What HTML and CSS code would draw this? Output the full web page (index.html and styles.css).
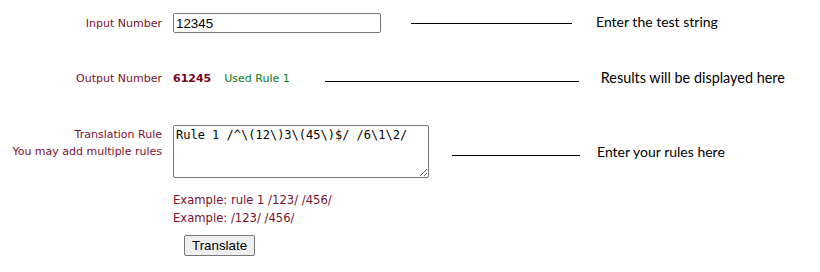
FILE: index.html
```html
<!DOCTYPE html>
<html lang="en">
<head>
    <meta charset="UTF-8">
    <meta name="viewport" content="width=device-width, initial-scale=1.0">
    <title>Number Translation</title>
    <link rel="stylesheet" href="styles.css">
</head>
<body>
    <div class="row row-input">
        <label class="label" for="inputNumber">Input Number</label>
        <input type="text" id="inputNumber" class="input-number" value="12345">
        <span class="pointer pointer-input"></span>
        <span class="note note-input">Enter the test string</span>
    </div>

    <div class="row row-output">
        <span class="label">Output Number</span>
        <span class="output-value">61245</span>
        <span class="used-rule">Used Rule 1</span>
        <span class="pointer pointer-output"></span>
        <span class="note note-output">Results will be displayed here</span>
    </div>

    <div class="row row-rules">
        <label class="label label-rules" for="rules">Translation Rule<br>You may add multiple rules</label>
        <textarea id="rules" class="rules">Rule 1 /^\(12\)3\(45\)$/ /6\1\2/</textarea>
        <span class="pointer pointer-rules"></span>
        <span class="note note-rules">Enter your rules here</span>
    </div>

    <div class="examples">
        <div>Example: rule 1 /123/ /456/</div>
        <div>Example: /123/ /456/</div>
    </div>

    <div class="actions">
        <button class="translate-btn">Translate</button>
    </div>
</body>
</html>
```

FILE: styles.css
```css
body {
    margin: 0;
    font-family: "DejaVu Sans", Verdana, sans-serif;
    font-size: 11px;
    color: #7a0f2e;
    background: #fff;
}
.row {
    display: flex;
}
.label {
    width: 162px;
    flex: none;
    text-align: right;
    margin-right: 11px;
    line-height: 17px;
}
.row-input {
    margin-top: 13px;
    height: 20px;
    align-items: center;
}
.input-number {
    box-sizing: border-box;
    width: 208px;
    height: 20px;
    margin: 0;
    padding: 0 2px;
    border: 1px solid #767676;
    border-radius: 2px;
    font-family: "Liberation Sans", Arial, sans-serif;
    font-size: 13.33px;
    color: #000;
}
.pointer {
    flex: none;
    height: 1px;
    background: #000;
}
.note {
    font-family: Lato, "Open Sans", sans-serif;
    font-size: 14px;
    color: #000;
}
.pointer-input {
    width: 161px;
    margin-left: 30px;
}
.note-input {
    margin-left: 24px;
    margin-top: -4px;
}
.row-output {
    margin-top: 35px;
    height: 20px;
    align-items: center;
}
.output-value {
    font-weight: bold;
    color: #800020;
}
.used-rule {
    margin-left: 13px;
    color: #0a7a1e;
}
.pointer-output {
    width: 254px;
    margin-left: 35px;
    margin-top: 6px;
}
.note-output {
    margin-left: 22px;
    margin-top: -2px;
    font-size: 14.4px;
}
.row-rules {
    margin-top: 37px;
    align-items: flex-start;
}
.label-rules {
    margin-top: 1px;
}
.rules {
    box-sizing: border-box;
    width: 256px;
    height: 53px;
    margin: 0;
    padding: 2px 2px;
    border: 1px solid #767676;
    border-radius: 2px;
    font-family: "DejaVu Sans Mono", Consolas, monospace;
    font-size: 12px;
    color: #000;
}
.pointer-rules {
    width: 128px;
    margin-left: 23px;
    margin-top: 30px;
}
.note-rules {
    margin-left: 17px;
    margin-top: 18px;
}
.examples {
    margin: 13px 0 0 173px;
    font-size: 11.6px;
    line-height: 18px;
}
.actions {
    margin: 8px 0 0 184px;
}
.translate-btn {
    height: 21px;
    padding: 0 7px;
    border: 1px solid #767676;
    border-radius: 2px;
    background: #efefef;
    font-family: "Liberation Sans", Arial, sans-serif;
    font-size: 13.33px;
    color: #000;
}
```
